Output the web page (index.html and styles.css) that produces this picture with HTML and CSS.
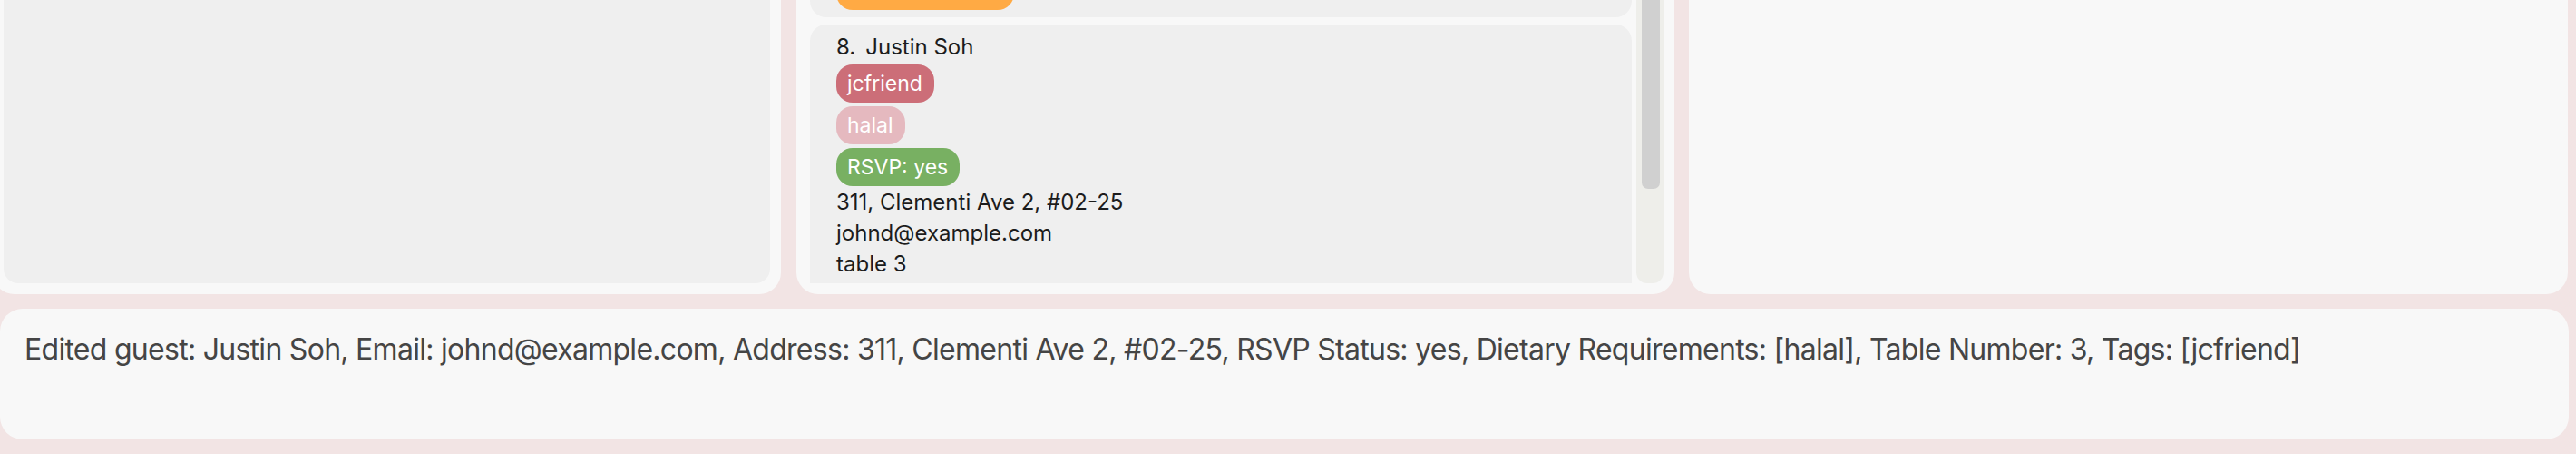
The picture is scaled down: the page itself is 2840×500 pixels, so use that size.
FILE: index.html
```html
<!DOCTYPE html>
<html>
<head>
<meta charset="utf-8">
<link rel="stylesheet" href="styles.css">
</head>
<body>
<div class="app">
  <div class="top-row">
    <div class="panel panel-left">
      <div class="left-inner"></div>
    </div>
    <div class="panel panel-mid">
      <div class="list-area">
        <div class="list-content">
          <div class="card card-prev">
            <span class="tag tag-orange">&nbsp;</span>
          </div>
          <div class="card">
            <div class="name-row"><span class="idx">8.</span><span class="name">Justin Soh</span></div>
            <div class="tags">
              <span class="tag tag-red">jcfriend</span>
              <span class="tag tag-pink">halal</span>
              <span class="tag tag-green">RSVP: yes</span>
            </div>
            <div class="details">
              <div class="line">311, Clementi Ave 2, #02-25</div>
              <div class="line">johnd@example.com</div>
              <div class="line">table 3</div>
            </div>
          </div>
        </div>
      </div>
      <div class="scroll-track"><div class="scroll-thumb"></div></div>
    </div>
    <div class="panel panel-right"></div>
  </div>
  <div class="result">Edited guest: Justin Soh, Email: johnd@example.com, Address: 311, Clementi Ave 2, #02-25, RSVP Status: yes, Dietary Requirements: [halal], Table Number: 3, Tags: [jcfriend]</div>
</div>
</body>
</html>
```

FILE: styles.css
```css
html, body {
  margin: 0;
  padding: 0;
  background: #f2e4e4;
  width: 2840px;
  height: 500px;
  overflow: hidden;
  font-family: Inter, "Liberation Sans", sans-serif;
}

.app {
  display: flex;
  flex-direction: column;
  gap: 16px;
  padding: 0 9px 16px 0;
}

.top-row {
  display: flex;
  height: 324px;
}

.panel {
  background: #f8f8f8;
  border-radius: 0 0 24px 24px;
  box-sizing: border-box;
}

.panel-left {
  width: 869px;
  margin-left: -8px;
  padding: 0 12px 12px 12px;
  display: flex;
}

.left-inner {
  flex: 1;
  background: #efefef;
  border-radius: 0 0 16px 16px;
}

.panel-mid {
  width: 968px;
  margin-left: 17px;
  padding: 0 12px 12px 15px;
  display: flex;
  gap: 5px;
}

.panel-right {
  width: 969px;
  margin-left: 16px;
}

.list-area {
  width: 906px;
  overflow: hidden;
}

.list-content {
  display: flex;
  flex-direction: column;
  gap: 8px;
  margin-top: -60px;
}

.card {
  background: #efefef;
  border-radius: 18px;
  padding: 10px 29px 20px 29px;
  color: #1c1c1c;
  font-size: 24px;
}

.card-prev {
  height: 79px;
  box-sizing: border-box;
  padding: 0 29px;
  display: flex;
  align-items: flex-end;
  padding-bottom: 8px;
}

.name-row {
  display: flex;
  gap: 11px;
  line-height: 30px;
}

.tags {
  display: flex;
  flex-direction: column;
  align-items: flex-start;
  gap: 4px;
  margin-top: 4px;
}

.tag {
  display: inline-block;
  height: 42px;
  line-height: 42px;
  padding: 0 13px 0 12px;
  border-radius: 18px;
  color: #ffffff;
  font-size: 23px;
  box-sizing: border-box;
}

.tag-orange {
  width: 196px;
  background: #ffaa44;
}

.tag-red { background: #cc6e78; }
.tag-pink { background: #e5b9bf; }
.tag-green { background: #78b062; }

.details {
  padding-top: 1px;
}

.line {
  line-height: 34px;
}

.scroll-track {
  width: 30px;
  background: #eeeeea;
  border-radius: 0 0 12px 12px;
  display: flex;
  flex-direction: column;
  padding: 0 4px 0 6px;
  box-sizing: border-box;
}

.scroll-thumb {
  height: 208px;
  background: #d0d0d0;
  border-radius: 0 0 7px 7px;
}

.result {
  height: 144px;
  background: #f8f8f8;
  border-radius: 25px;
  box-sizing: border-box;
  padding: 21px 27px;
  margin-right: -1px;
  font-size: 32px;
  letter-spacing: -0.72px;
  line-height: 48px;
  color: #454545;
  white-space: nowrap;
}
```
